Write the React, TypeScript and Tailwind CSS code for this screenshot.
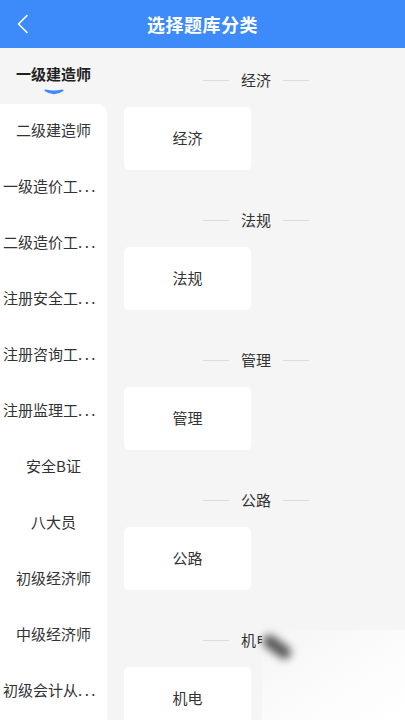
const categories = [
  '一级建造师',
  '二级建造师',
  '一级造价工',
  '二级造价工',
  '注册安全工',
  '注册咨询工',
  '注册监理工',
  '安全B证',
  '八大员',
  '初级经济师',
  '中级经济师',
  '初级会计从',
];

// names that were cut off in the app keep their dots
const cut = new Set(['一级造价工', '二级造价工', '注册安全工', '注册咨询工', '注册监理工', '初级会计从']);

const subjects = ['经济', '法规', '管理', '公路', '机电'];

const font = { fontFamily: '"Noto Sans CJK SC", "Noto Sans", sans-serif' };

export default function App() {
  const [active, ...rest] = categories;

  return (
    <div className="w-[405px] h-[720px] bg-[#f5f5f5] overflow-hidden relative" style={font}>
      {/* Header */}
      <header className="h-[48px] bg-[#3d8afa] flex items-center relative">
        <button className="absolute left-[16px] top-[14px] text-white">
          <svg width="14" height="20" viewBox="0 0 14 20" fill="none">
            <path d="M11 1.5 L2.5 10 L11 18.5" stroke="white" strokeWidth="1.6" strokeLinecap="round" strokeLinejoin="round" />
          </svg>
        </button>
        <h1 className="flex-1 text-center text-white text-[18px] font-bold tracking-[0.5px]">选择题库分类</h1>
      </header>

      <div className="flex">
        {/* Sidebar */}
        <aside className="w-[107px] shrink-0">
          <div className="h-[56px] flex flex-col items-center pt-[16px]">
            <span className="text-[15px] font-bold text-[#222] leading-[20px]">{active}</span>
            <svg width="20" height="7" viewBox="0 0 20 7" className="mt-[5px]">
              <path d="M1.5 1.5 Q10 7 18.5 1.5 Q10 3.5 1.5 1.5 Z" fill="#3d8afa" stroke="#3d8afa" strokeWidth="2" strokeLinejoin="round" />
            </svg>
          </div>
          <ul className="bg-white rounded-tr-[10px]">
            {rest.map((c) => (
              <li
                key={c}
                className={`h-[56px] flex items-center pb-[3px] text-[15px] text-[#333] whitespace-nowrap ${
                  cut.has(c) ? 'justify-start pl-[3px]' : 'justify-center'
                }`}
              >
                {c}
                {cut.has(c) && <span className="tracking-[2.5px]">...</span>}
              </li>
            ))}
          </ul>
        </aside>

        {/* Subjects */}
        <main className="flex-1 pt-[12px]">
          {subjects.map((s) => (
            <section key={s} className="pb-[30px]">
              <div className="h-[40px] flex items-center justify-center gap-[12px]">
                <span className="w-[26px] h-px bg-[#dcdcdc]" />
                <span className="text-[15px] text-[#333]">{s}</span>
                <span className="w-[26px] h-px bg-[#dcdcdc]" />
              </div>
              <div className="mt-[7px] ml-[17px] w-[127px] h-[63px] bg-white rounded-[5px] flex items-center justify-center text-[15px] text-[#333]">
                {s}
              </div>
            </section>
          ))}
        </main>
      </div>

      {/* Page curl overlay */}
      <div className="absolute left-[262px] top-[630px] right-0 bottom-0 pointer-events-none bg-gradient-to-br from-[#f5f5f5] via-[#fbfbfb] to-white" />
      <div className="absolute left-[264px] top-[631px] w-[32px] h-[13px] rounded-full bg-[#555] blur-[4px] rotate-[36deg] origin-left pointer-events-none" />
    </div>
  );
}
